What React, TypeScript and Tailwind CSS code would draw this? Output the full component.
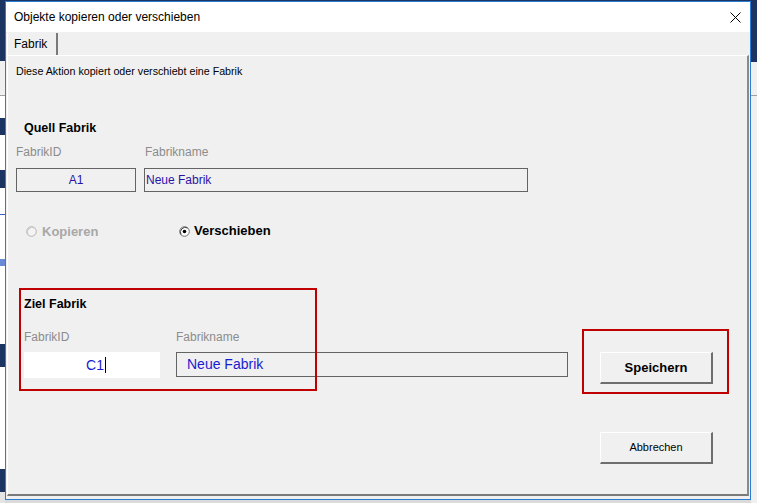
import React from 'react';

const navy = 'bg-[#1c3461]';

function Radio({ checked, disabled }: { checked?: boolean; disabled?: boolean }) {
  return (
    <svg width="11" height="11" viewBox="0 0 11 11" className="shrink-0">
      <circle cx="5.5" cy="5.5" r="4.8" fill={disabled ? '#f4f4f4' : '#ffffff'} stroke={disabled ? '#b4b4b4' : '#707070'} strokeWidth="1" />
      <path d="M2 8.5 A4.8 4.8 0 0 1 8.5 2" fill="none" stroke={disabled ? '#c8c8c8' : '#404040'} strokeWidth="1" />
      {checked && <circle cx="5.5" cy="5.5" r="1.8" fill="#000000" />}
    </svg>
  );
}

function Button({ children, bold }: { children: React.ReactNode; bold?: boolean }) {
  return (
    <button
      className={`flex h-[32px] w-[113px] shrink-0 items-center justify-center border-t border-l border-r-2 border-b-2 border-t-white border-l-white border-r-[#6e6e6e] border-b-[#6e6e6e] bg-[#f0f0f0] text-black ${
        bold ? 'text-[13px] font-bold' : 'text-[11px]'
      }`}
    >
      {children}
    </button>
  );
}

export default function App() {
  return (
    <div className="relative flex h-[503px] w-[757px] overflow-hidden bg-[#f0f0f0] font-['Liberation_Sans',Arial,sans-serif]">
      {/* Application behind the dialog, left edge */}
      <div className="flex w-[5px] shrink-0 flex-col">
        <div className={`h-[61px] ${navy}`} />
        <div className="h-[34px] bg-[#f0f0f0]" />
        <div className="h-[1px] bg-[#a0a0a0]" />
        <div className="h-[22px] bg-white" />
        <div className={`h-[17px] ${navy}`} />
        <div className="h-[35px] bg-white" />
        <div className={`h-[18px] ${navy}`} />
        <div className="h-[18px] bg-white" />
        <div className="h-[9px] bg-white border-b border-[#3a62c4]" />
        <div className="h-[44px] bg-white" />
        <div className="h-[7px] bg-[#6a8ad8]" />
        <div className="h-[78px] bg-white" />
        <div className={`h-[23px] ${navy}`} />
        <div className="h-[102px] bg-white" />
        <div className={`h-[23px] ${navy}`} />
        <div className="flex-1 bg-[#e4e4e4]" />
      </div>

      {/* Dialog column */}
      <div className="flex w-[746px] shrink-0 flex-col">
        <div className={`h-[1px] shrink-0 ${navy}`} />
        <div className="flex h-[499px] shrink-0 flex-col border border-[#2b7cd3] bg-[#f0f0f0]">
          {/* Title bar */}
          <div className="flex h-[30px] shrink-0 items-center justify-between bg-white pl-[8px] pr-[9px]">
            <span className="text-[12px] leading-[16px] text-black">Objekte kopieren oder verschieben</span>
            <svg width="11" height="11" viewBox="0 0 11 11">
              <path d="M0.5 0.5 L10.5 10.5 M10.5 0.5 L0.5 10.5" stroke="#000" strokeWidth="1" />
            </svg>
          </div>

          {/* Tabs */}
          <div className="flex h-[23px] shrink-0 items-end pl-[1px]">
            <div className="flex h-[22px] w-[51px] items-center border-l border-r-2 border-l-white border-r-[#7a7a7a] pl-[6px] text-[12px] text-black">
              Fabrik
            </div>
          </div>

          {/* Tab panel */}
          <div className="mx-[1px] mb-[3px] flex flex-1 flex-col border-t border-l border-r-2 border-b-2 border-t-white border-l-white border-r-[#8a8a8a] border-b-[#7a7a7a]">
            <p className="ml-[8px] mt-[8px] text-[10.7px] leading-[14px] text-black">
              Diese Aktion kopiert oder verschiebt eine Fabrik
            </p>

            {/* Source */}
            <p className="ml-[16px] mt-[42px] text-[12.5px] font-bold leading-[16px] text-black">Quell Fabrik</p>
            <div className="ml-[8px] mt-[8px] flex text-[12px] leading-[16px] text-[#8c8c8c]">
              <span className="w-[128px]">FabrikID</span>
              <span className="pl-[1px]">Fabrikname</span>
            </div>
            <div className="ml-[8px] mt-[8px] flex gap-[8px] text-[12px] text-[#2a14a8]">
              <div className="flex h-[24px] w-[120px] items-center justify-center border border-[#646464]">A1</div>
              <div className="flex h-[24px] w-[384px] items-center border border-[#646464] pl-[1px]">Neue Fabrik</div>
            </div>

            {/* Mode */}
            <div className="ml-[18px] mt-[31px] flex h-[16px] items-center text-[13px] font-bold">
              <div className="flex w-[153px] items-center gap-[5px] text-[#a8a8a8]">
                <Radio disabled />
                <span className="mt-[2px]">Kopieren</span>
              </div>
              <div className="flex items-center gap-[4px] text-black">
                <Radio checked />
                <span>Verschieben</span>
              </div>
            </div>

            {/* Target */}
            <p className="ml-[16px] mt-[57px] text-[12.5px] font-bold leading-[16px] text-black">Ziel Fabrik</p>
            <div className="ml-[16px] mt-[17px] flex text-[12px] leading-[16px] text-[#8c8c8c]">
              <span className="w-[152px]">FabrikID</span>
              <span>Fabrikname</span>
            </div>
            <div className="ml-[16px] mt-[7px] flex items-start text-[14px] text-[#1a1ad0]">
              <div className="flex h-[26px] w-[136px] items-center justify-center bg-white pl-[8px]">
                C1
                <span className="ml-[1px] inline-block h-[16px] w-[1px] bg-black" />
              </div>
              <div className="ml-[16px] flex h-[25px] w-[392px] items-center border border-[#646464] pl-[10px]">
                Neue Fabrik
              </div>
              <div className="ml-[32px]">
                <Button bold>Speichern</Button>
              </div>
            </div>

            <div className="ml-[592px] mt-[48px]">
              <Button>Abbrechen</Button>
            </div>
          </div>
        </div>
        <div className="flex-1 bg-[#dadada]" />
      </div>

      {/* Application behind the dialog, right edge */}
      <div className="flex flex-1 flex-col">
        <div className={`h-[62px] ${navy}`} />
        <div className="h-[33px] bg-[#f0f0f0]" />
        <div className="h-[1px] bg-[#a0a0a0]" />
        <div className="flex-1 bg-[#f0f0f0]" />
      </div>

      {/* Red annotation frames */}
      <div className="pointer-events-none absolute left-[19px] top-[288px] h-[103px] w-[298px] border-2 border-[#c00000]" />
      <div className="pointer-events-none absolute left-[582px] top-[329px] h-[65px] w-[147px] border-2 border-[#c00000]" />
    </div>
  );
}
